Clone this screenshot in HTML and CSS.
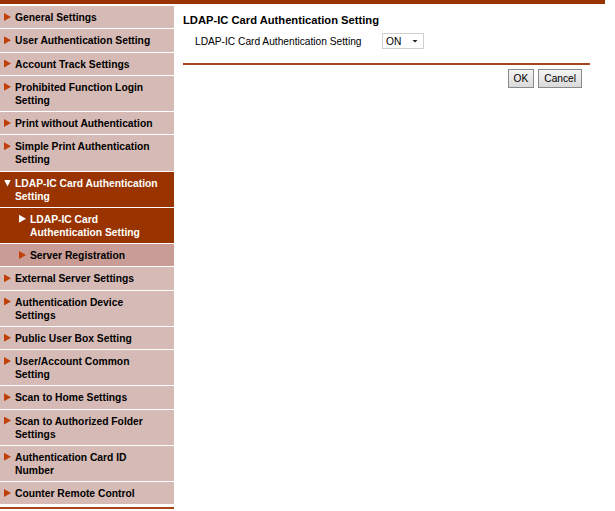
FILE: index.html
```html
<!DOCTYPE html>
<html lang="en">
<head>
<meta charset="utf-8">
<title>LDAP-IC Card Authentication Setting</title>
<link rel="stylesheet" href="styles.css">
</head>
<body>
<div class="topbar"></div>
<div class="layout">
  <nav class="sidebar">
    <ul class="menu">
      <li class="item"><span class="arrow"></span><span class="label">General Settings</span></li>
      <li class="item"><span class="arrow"></span><span class="label">User Authentication Setting</span></li>
      <li class="item"><span class="arrow"></span><span class="label">Account Track Settings</span></li>
      <li class="item"><span class="arrow"></span><span class="label">Prohibited Function Login Setting</span></li>
      <li class="item"><span class="arrow"></span><span class="label">Print without Authentication</span></li>
      <li class="item"><span class="arrow"></span><span class="label">Simple Print Authentication Setting</span></li>
      <li class="item active"><span class="arrow down"></span><span class="label">LDAP-IC Card Authentication Setting</span></li>
      <li class="item sub current"><span class="arrow"></span><span class="label">LDAP-IC Card<br>Authentication Setting</span></li>
      <li class="item sub other"><span class="arrow"></span><span class="label">Server Registration</span></li>
      <li class="item"><span class="arrow"></span><span class="label">External Server Settings</span></li>
      <li class="item"><span class="arrow"></span><span class="label">Authentication Device Settings</span></li>
      <li class="item"><span class="arrow"></span><span class="label">Public User Box Setting</span></li>
      <li class="item"><span class="arrow"></span><span class="label">User/Account Common Setting</span></li>
      <li class="item"><span class="arrow"></span><span class="label">Scan to Home Settings</span></li>
      <li class="item"><span class="arrow"></span><span class="label">Scan to Authorized Folder Settings</span></li>
      <li class="item"><span class="arrow"></span><span class="label">Authentication Card ID Number</span></li>
      <li class="item"><span class="arrow"></span><span class="label">Counter Remote Control</span></li>
    </ul>
    <div class="sidebar-rule"></div>
  </nav>
  <main class="content">
    <h1 class="title">LDAP-IC Card Authentication Setting</h1>
    <div class="form-row">
      <span class="form-label">LDAP-IC Card Authentication Setting</span>
      <span class="select"><span class="select-value">ON</span><span class="select-caret"></span></span>
    </div>
    <div class="rule"></div>
    <div class="buttons">
      <button class="btn" type="button">OK</button>
      <button class="btn" type="button">Cancel</button>
    </div>
  </main>
</div>
</body>
</html>
```

FILE: styles.css
```css
html, body {
  margin: 0;
  padding: 0;
  background: #ffffff;
  font-family: "Liberation Sans", Arial, sans-serif;
  color: #000;
}

.topbar {
  width: 605px;
  height: 4px;
  background: #993300;
  margin-bottom: 1px;
}

.layout {
  display: flex;
  align-items: flex-start;
}

.sidebar {
  width: 174px;
  flex: 0 0 174px;
  padding-top: 1px;
}

.menu {
  list-style: none;
  margin: 0;
  padding: 0;
  display: flex;
  flex-direction: column;
  gap: 1px;
}

.item {
  display: flex;
  align-items: flex-start;
  gap: 4px;
  padding: 5px 14px 4.25px 4px;
  background: #d6bab5;
  font-size: 10.3px;
  font-weight: bold;
  line-height: 13px;
  color: #000;
}

.arrow {
  flex: 0 0 7px;
  width: 7px;
  height: 8px;
  margin-top: 2px;
  background: #c0400a;
  clip-path: polygon(0 0, 100% 50%, 0 100%);
}

.arrow.down {
  height: 7px;
  margin-top: 3px;
  background: #ffffff;
  clip-path: polygon(0 0, 100% 0, 50% 100%);
}

.item.active {
  background: #993300;
  color: #ffffff;
}

.item.sub {
  padding-left: 19px;
}

.item.current {
  background: #993300;
  color: #ffffff;
}

.item.current .arrow {
  background: #ffffff;
}

.item.other {
  background: #c99d95;
}

.sidebar-rule {
  margin-top: 3px;
  height: 2px;
  background: #a8441c;
}

.content {
  flex: 0 0 407px;
  padding: 8px 0 0 9px;
}

.title {
  margin: 0;
  font-size: 11.2px;
  font-weight: bold;
  line-height: 15px;
}

.form-row {
  display: flex;
  align-items: center;
  margin-top: 5px;
  padding-left: 12px;
}

.form-label {
  width: 187px;
  font-size: 10.2px;
}

.select {
  display: flex;
  align-items: center;
  justify-content: space-between;
  box-sizing: border-box;
  width: 42px;
  height: 16px;
  padding: 0 5px 0 3px;
  border: 1px solid #cfcfcf;
  background: #ffffff;
  font-size: 10.2px;
}

.select-caret {
  width: 6px;
  height: 3px;
  background: #222;
  clip-path: polygon(0 0, 100% 0, 50% 100%);
}

.rule {
  margin-top: 14px;
  height: 2px;
  background: #a8441c;
}

.buttons {
  display: flex;
  justify-content: flex-end;
  gap: 4px;
  margin-top: 4px;
  padding-right: 8px;
}

.btn {
  height: 19px;
  padding: 0 5px;
  border: 1px solid #8a8a8a;
  border-radius: 0;
  background: linear-gradient(#f4f4f4, #dadada);
  font-family: "Liberation Sans", Arial, sans-serif;
  font-size: 10.2px;
  color: #000;
}
```
